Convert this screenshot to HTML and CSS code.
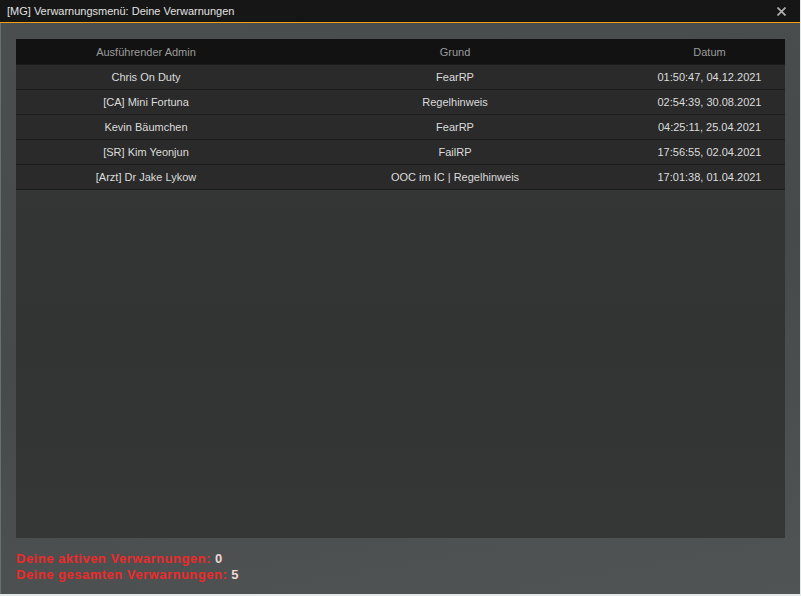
FILE: index.html
```html
<!DOCTYPE html>
<html lang="de">

<head>
  <meta charset="UTF-8">
  <meta name="viewport" content="width=device-width, initial-scale=1.0">
  <title>Verwarnungsmenü</title>

  <link rel="stylesheet" href="styles.css">
</head>

<body>

  <div class="window">

    <header class="titlebar">
      <span class="title">[MG] Verwarnungsmenü: Deine Verwarnungen</span>
      <span class="close">
        <svg width="9" height="9" viewBox="0 0 9 9">
          <path d="M0.5 0.5 L8.5 8.5 M8.5 0.5 L0.5 8.5" stroke="#b0b0b0" stroke-width="1.7" />
        </svg>
      </span>
    </header>

    <main class="content">

      <div class="panel">
        <div class="row head">
          <span>Ausführender Admin</span>
          <span>Grund</span>
          <span>Datum</span>
        </div>
        <div class="row">
          <span>Chris On Duty</span>
          <span>FearRP</span>
          <span>01:50:47, 04.12.2021</span>
        </div>
        <div class="row">
          <span>[CA] Mini Fortuna</span>
          <span>Regelhinweis</span>
          <span>02:54:39, 30.08.2021</span>
        </div>
        <div class="row">
          <span>Kevin Bäumchen</span>
          <span>FearRP</span>
          <span>04:25:11, 25.04.2021</span>
        </div>
        <div class="row">
          <span>[SR] Kim Yeonjun</span>
          <span>FailRP</span>
          <span>17:56:55, 02.04.2021</span>
        </div>
        <div class="row">
          <span>[Arzt] Dr Jake Lykow</span>
          <span>OOC im IC | Regelhinweis</span>
          <span>17:01:38, 01.04.2021</span>
        </div>
      </div>

      <div class="stats">
        <p>Deine aktiven Verwarnungen: <b>0</b></p>
        <p>Deine gesamten Verwarnungen: <b>5</b></p>
      </div>

    </main>

  </div>

</body>

</html>
```

FILE: styles.css
```css
body {
  margin: 0;
  background-color: #e3e9e9;
  font-family: "Liberation Sans", Arial, sans-serif;
  font-size: 11px;
}

.window {
  display: flex;
  flex-direction: column;
  width: 800px;
  height: 594px;
}

.titlebar {
  display: flex;
  align-items: center;
  justify-content: space-between;
  height: 22px;
  padding: 0 14px 0 7px;
  background-color: #161616;
  border-bottom: 1px solid #f0a010;
  color: #e2e2e2;
}

.close {
  display: flex;
  padding-top: 1px;
}

.content {
  flex: 1;
  display: flex;
  flex-direction: column;
  padding: 16px 15px 11px 15px;
  background: linear-gradient(170deg, #4a4e4e 0%, #474a4a 50%, #515454 100%);
  border-left: 1px solid #66706f;
}

.panel {
  flex: 1;
  background: linear-gradient(180deg, #363838 0%, #323333 60%, #353636 100%);
}

.row {
  display: grid;
  grid-template-columns: 260px 358px 151px;
  height: 24px;
  align-items: center;
  background-color: #2a2a2a;
  border-bottom: 1px solid #1c1c1c;
  color: #dcdcdc;
}

.row span {
  text-align: center;
}

.row.head {
  background-color: #121212;
  height: 25px;
  color: #9c9c9c;
}

.stats {
  padding-top: 13px;
  color: #ec2a2a;
  font-size: 13px;
  font-weight: bold;
  letter-spacing: 0.5px;
}

.stats p {
  margin: 0;
  line-height: 16px;
}

.stats b {
  color: #f0d6d6;
}
```
